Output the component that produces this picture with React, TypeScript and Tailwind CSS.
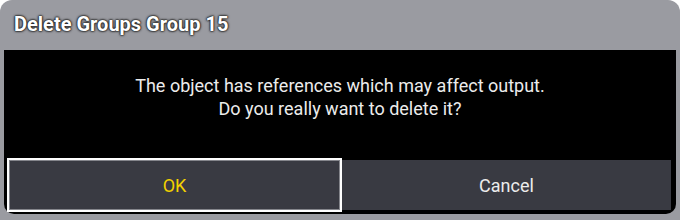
export default function App() {
  return (
    <div className="w-[680px] h-[220px] bg-[#9a9ba1] rounded-t-[12px] flex flex-col font-['Roboto',sans-serif] overflow-hidden">
      <div className="h-[48px] flex items-center pl-[14px] text-white text-[20px] font-bold [text-shadow:0_0_1px_#222,0_0_2px_#222,0_0_2px_#222,0_0_3px_#333]">
        Delete Groups Group 15
      </div>
      <div className="mt-[2px] mx-[4px] h-[164px] bg-black rounded-b-[10px] flex flex-col px-[5px]">
        <div className="flex-1 flex flex-col items-center pt-[24px] text-[18px] leading-[23px] text-[#ececec]">
          <p>The object has references which may affect output.</p>
          <p>Do you really want to delete it?</p>
        </div>
        <div className="flex gap-[2px] h-[50px] mb-[4px]">
          <button className="flex-1 bg-[#393a42] border border-[#85868c] ring-2 ring-white text-[18px] text-[#f2d100]">
            OK
          </button>
          <button className="flex-1 bg-[#393a42] text-[18px] text-[#ececec]">
            Cancel
          </button>
        </div>
      </div>
    </div>
  );
}
